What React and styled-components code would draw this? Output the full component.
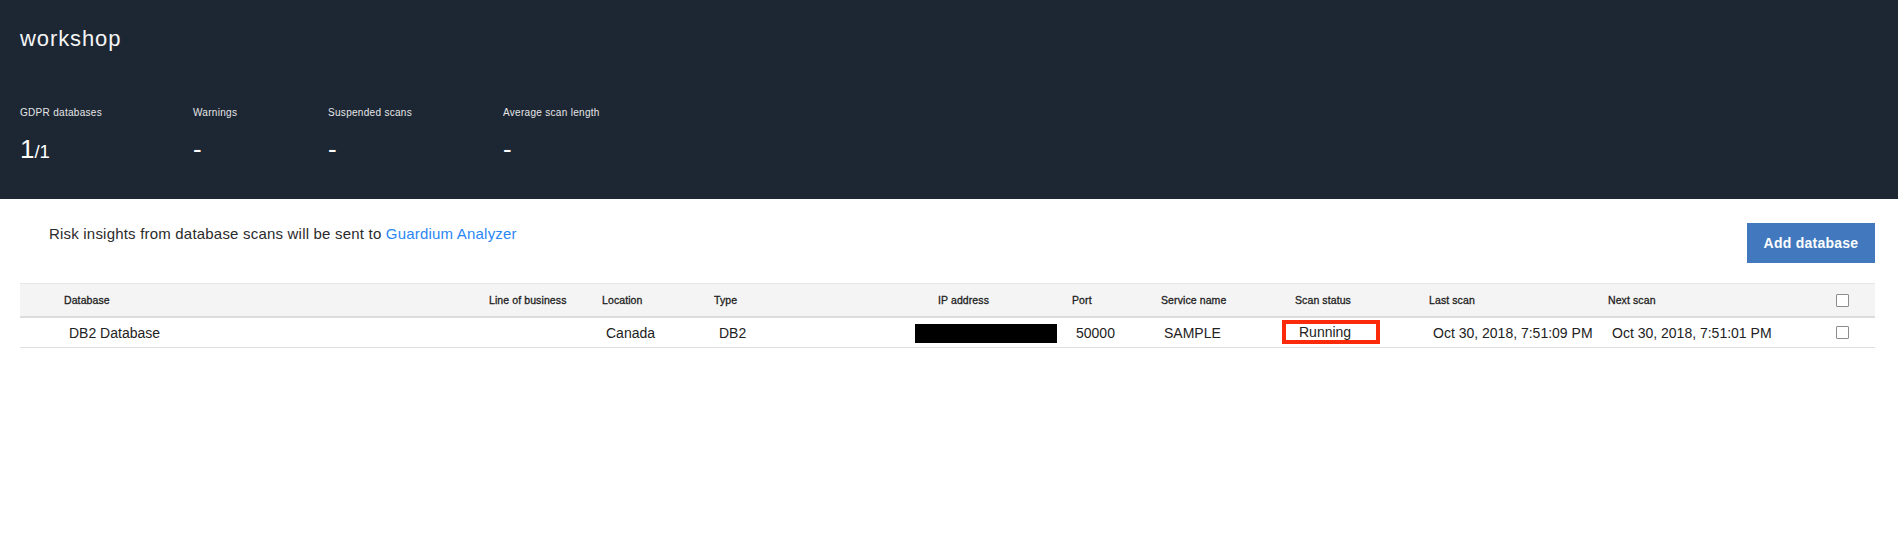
import React from "react";
import styled, { createGlobalStyle } from "styled-components";

const Global = createGlobalStyle`
  html, body { margin: 0; padding: 0; background: #ffffff; }
  body { font-family: "Liberation Sans", Arial, sans-serif; }
  * { box-sizing: border-box; }
`;

const COLS = "469px 113px 112px 201px 157px 89px 121px 147px 179px 228px 39px";

const Page = styled.div`
  width: 1898px;
  min-height: 542px;
  background: #fff;
`;

const Masthead = styled.header`
  height: 199px;
  background: #1d2734;
  padding: 25px 20px 0 20px;
  color: #fff;
`;

const Title = styled.h1`
  margin: 0;
  font-size: 22px;
  line-height: 27px;
  font-weight: 400;
  letter-spacing: 0.9px;
  color: #f4f4f4;
`;

const Stats = styled.div`
  display: flex;
  margin-top: 55px;
`;

const Stat = styled.div`
  width: ${(p) => p.$w}px;
  display: flex;
  flex-direction: column;
  gap: 15px;
`;

const StatLabel = styled.div`
  font-size: 10px;
  line-height: 12px;
  letter-spacing: 0.3px;
  color: #e6e6e6;
`;

const StatValue = styled.div`
  font-size: 26px;
  line-height: 30px;
  color: #ffffff;
  white-space: nowrap;
`;

const Small = styled.span`
  font-size: 18.5px;
`;

const Main = styled.main`
  padding: 24px 23px 0 20px;
`;

const Toolbar = styled.div`
  display: flex;
  justify-content: space-between;
  align-items: flex-start;
`;

const Message = styled.p`
  margin: 2px 0 0 29px;
  font-size: 15px;
  line-height: 18px;
  letter-spacing: 0.2px;
  color: #2b2b2b;
`;

const Link = styled.a`
  color: #2b87f3;
  text-decoration: none;
`;

const PrimaryButton = styled.button`
  width: 128px;
  height: 40px;
  border: none;
  background: #4178be;
  color: #fff;
  font-family: "Liberation Sans", Arial, sans-serif;
  font-size: 14px;
  font-weight: 700;
  letter-spacing: 0.25px;
  padding: 0;
  cursor: pointer;
`;

const Table = styled.div`
  margin-top: 20px;
  width: 1855px;
`;

const HeadRow = styled.div`
  display: grid;
  grid-template-columns: ${COLS};
  height: 35px;
  background: #f4f4f4;
  border-top: 1px solid #e6e6e6;
  border-bottom: 2px solid #dcdcdc;
  align-items: center;
`;

const HeadCell = styled.div`
  padding-left: ${(p) => p.$pad || 0}px;
  font-size: 10.5px;
  font-weight: 400;
  letter-spacing: 0.1px;
  -webkit-text-stroke: 0.3px #1e1e1e;
  color: #1e1e1e;
  white-space: nowrap;
`;

const DataRow = styled.div`
  display: grid;
  grid-template-columns: ${COLS};
  height: 30px;
  border-bottom: 1px solid #e0e0e0;
  align-items: center;
`;

const Cell = styled.div`
  padding-left: ${(p) => p.$pad ?? 4}px;
  font-size: 14px;
  color: #222;
  white-space: nowrap;
`;

const Redacted = styled.div`
  width: 142px;
  height: 19px;
  background: #000;
  margin-top: 1px;
`;

const StatusBox = styled.div`
  width: 98px;
  height: 24px;
  border: 4px solid #fb2a0b;
  padding-left: 13px;
  font-size: 14px;
  line-height: 16px;
  color: #222;
  margin-bottom: 2px;
`;

const Check = styled.span`
  display: block;
  width: 13px;
  height: 13px;
  border: 1px solid #8d8d8d;
  border-radius: 1px;
  background: #fff;
`;

const heads = [
  ["Database", 44],
  ["Line of business", 0],
  ["Location", 0],
  ["Type", 0],
  ["IP address", 23],
  ["Port", 0],
  ["Service name", 0],
  ["Scan status", 13],
  ["Last scan", 0],
  ["Next scan", 0],
];

export default function App() {
  return (
    <Page>
      <Global />
      <Masthead>
        <Title>workshop</Title>
        <Stats>
          <Stat $w={173}>
            <StatLabel>GDPR databases</StatLabel>
            <StatValue>
              1<Small>/1</Small>
            </StatValue>
          </Stat>
          <Stat $w={135}>
            <StatLabel>Warnings</StatLabel>
            <StatValue>-</StatValue>
          </Stat>
          <Stat $w={175}>
            <StatLabel>Suspended scans</StatLabel>
            <StatValue>-</StatValue>
          </Stat>
          <Stat $w={200}>
            <StatLabel>Average scan length</StatLabel>
            <StatValue>-</StatValue>
          </Stat>
        </Stats>
      </Masthead>
      <Main>
        <Toolbar>
          <Message>
            Risk insights from database scans will be sent to{" "}
            <Link href="#">Guardium Analyzer</Link>
          </Message>
          <PrimaryButton>Add database</PrimaryButton>
        </Toolbar>
        <Table>
          <HeadRow>
            {heads.map(([t, p]) => (
              <HeadCell key={t} $pad={p}>
                {t}
              </HeadCell>
            ))}
            <HeadCell>
              <Check />
            </HeadCell>
          </HeadRow>
          <DataRow>
            <Cell $pad={49}>DB2 Database</Cell>
            <Cell />
            <Cell>Canada</Cell>
            <Cell $pad={5}>DB2</Cell>
            <Cell $pad={0}>
              <Redacted />
            </Cell>
            <Cell>50000</Cell>
            <Cell $pad={3}>SAMPLE</Cell>
            <Cell $pad={0}>
              <StatusBox>Running</StatusBox>
            </Cell>
            <Cell>Oct 30, 2018, 7:51:09 PM</Cell>
            <Cell>Oct 30, 2018, 7:51:01 PM</Cell>
            <Cell $pad={0}>
              <Check />
            </Cell>
          </DataRow>
        </Table>
      </Main>
    </Page>
  );
}
